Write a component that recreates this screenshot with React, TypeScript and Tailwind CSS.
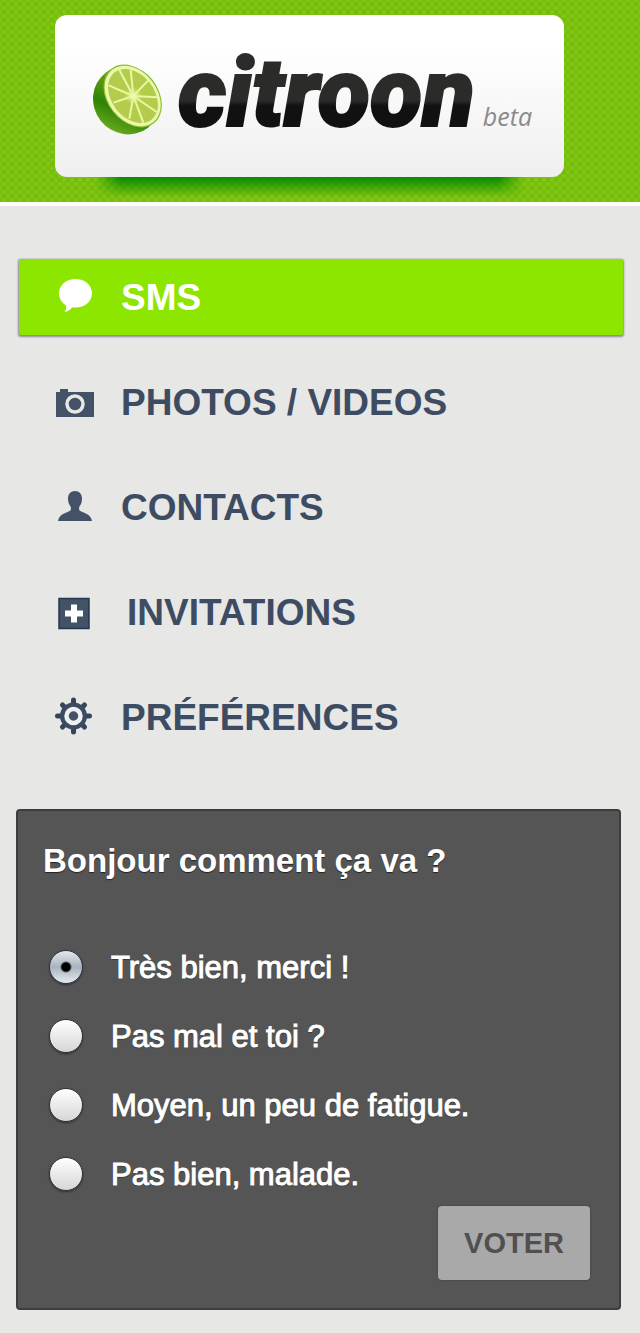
import { useState } from "react";
import type { ReactNode } from "react";

const spokes = [
  [118, 60],
  [152, 58],
  [204, 92],
  [232, 142],
  [230, 186],
  [190, 218],
  [148, 206],
  [100, 158],
  [86, 106],
];

function Lime() {
  return (
    <svg viewBox="36 36 210 222" className="h-[74px] w-[70px] shrink-0" aria-hidden="true">
      <defs>
        <linearGradient id="rind" x1="0.1" y1="0.1" x2="0.6" y2="1">
          <stop offset="0" stopColor="#86b81f" />
          <stop offset="0.35" stopColor="#5f9c16" />
          <stop offset="0.7" stopColor="#2f8306" />
          <stop offset="1" stopColor="#65a61c" />
        </linearGradient>
        <radialGradient id="core" cx="0.5" cy="0.5" r="0.5">
          <stop offset="0" stopColor="#f3fbc0" />
          <stop offset="0.4" stopColor="#e6f59a" stopOpacity="0.8" />
          <stop offset="1" stopColor="#d9ee7a" stopOpacity="0" />
        </radialGradient>
      </defs>
      <ellipse cx="140" cy="151" rx="104" ry="99" transform="rotate(52 140 151)" fill="url(#rind)" />
      <ellipse cx="158" cy="138" rx="104" ry="76" transform="rotate(52 158 138)" fill="#8dbd28" />
      <ellipse cx="158" cy="138" rx="100" ry="73" transform="rotate(52 158 138)" fill="#eaf8ae" />
      <ellipse cx="159" cy="138" rx="90" ry="64" transform="rotate(52 159 138)" fill="#b3cc4c" />
      {spokes.map(([x, y]) => (
        <line key={`${x}-${y}`} x1="160" y1="138" x2={x} y2={y} stroke="#e9f7a6" strokeWidth="6" />
      ))}
      <circle cx="160" cy="138" r="26" fill="url(#core)" />
    </svg>
  );
}

const bubble = (
  <svg viewBox="0 0 40 40" className="h-10 w-10 fill-white" aria-hidden="true">
    <path d="M20.500 2C29.700 2 37 8 37 16.300S29.700 30.600 20.500 30.600c-1.200 0-2.300-.1-3.300-.3C15 33.400 12.500 34.500 9.600 35.200c1.500-2.200 1.600-4.500 1.300-7C6.700 25.700 4 21.600 4 16.300 4 8 11.300 2 20.500 2z" />
  </svg>
);

const camera = (
  <svg viewBox="0 0 40 40" className="h-10 w-10 fill-[#435266]" aria-hidden="true">
    <path d="M1 10h4V7h8v3h26v25H1z" />
    <circle cx="20" cy="22" r="8" fill="none" stroke="#e7e7e5" strokeWidth="3.500" />
  </svg>
);

const person = (
  <svg viewBox="0 0 40 40" className="h-10 w-10 fill-[#435266]" aria-hidden="true">
    <path d="M20 4c4.300 0 7 3 7 7.800 0 3.200-1 6-2.700 8-.4 1.600-.3 3 .5 4 2 1.600 11.200 2.700 12.200 10.200H3c1-7.500 10.200-8.600 12.200-10.200.8-1 .9-2.400.5-4-1.700-2-2.700-4.800-2.700-8C13 7 15.700 4 20 4z" />
  </svg>
);

const plus = (
  <svg viewBox="0 0 46 40" className="h-10 w-[46px]" aria-hidden="true">
    <rect x="4" y="6.500" width="30" height="30" fill="#435266" stroke="#26384f" strokeWidth="1.500" />
    <path d="M16 12.500h6v6h6v6h-6v6h-6v-6h-6v-6h6z" fill="#fff" />
  </svg>
);

const gear = (
  <svg viewBox="0 0 40 40" className="h-10 w-10" aria-hidden="true">
    <path
      d="M18.500 3v32M2.500 19h32M7.500 8l22 22M29.500 8l-22 22"
      fill="none"
      stroke="#34445a"
      strokeWidth="5"
      strokeLinecap="round"
    />
    <circle cx="18.500" cy="19" r="13.500" fill="#3c4b60" />
    <circle cx="18.500" cy="19" r="7" fill="#435266" stroke="#eef1f4" strokeWidth="4.500" />
  </svg>
);

const links: { label: string; icon: ReactNode }[] = [
  { label: "SMS", icon: bubble },
  { label: "PHOTOS / VIDEOS", icon: camera },
  { label: "CONTACTS", icon: person },
  { label: "INVITATIONS", icon: plus },
  { label: "PRÉFÉRENCES", icon: gear },
];

const answers = [
  "Très bien, merci !",
  "Pas mal et toi ?",
  "Moyen, un peu de fatigue.",
  "Pas bien, malade.",
];

function Header() {
  return (
    <header className="border-b-4 border-white bg-[#83ca12] bg-[linear-gradient(45deg,transparent_30%,#6cb00c88_50%,transparent_70%),linear-gradient(-45deg,transparent_30%,#6cb00c88_50%,transparent_70%)] bg-size-[8px_8px] px-[55px] pt-[15px]">
      <div className="flex h-[162px] max-w-[509px] items-center rounded-xl bg-linear-to-b from-white from-20% to-[#efefef] pt-1.5 pl-[37px]">
        <Lime />
        <div className="flex items-baseline pb-3 pl-4">
          <span className="bg-linear-to-b from-[#2b2b29] from-57% to-[#111] to-62% bg-clip-text pr-2 font-['Roboto',sans-serif] text-[96px] leading-[108px] font-black text-transparent italic [-webkit-text-stroke:2px_transparent]">
            citroon
          </span>
          <span className="font-['Open_Sans',sans-serif] text-[25px] text-[#8a8a8a] italic">beta</span>
        </div>
      </div>
      <div className="h-[25px] max-w-[509px] px-10">
        <div className="h-5 bg-linear-to-b from-[#078a00] to-transparent mask-x-from-94%" />
      </div>
    </header>
  );
}

function Menu() {
  return (
    <nav className="flex flex-col gap-[29px] pr-[17px] pl-[19px]">
      {links.map(({ label, icon }, i) => (
        <a
          key={label}
          href="#"
          className={
            i === 0
              ? "flex h-[76px] items-center gap-[26px] rounded-xs bg-[#8de600] pl-9 text-[37px] font-bold text-white shadow-[0_1px_2px_1px_#8f8a99]"
              : "flex h-[76px] items-center gap-[26px] rounded-xs pl-9 text-[37px] font-bold text-[#3d4c62]"
          }
        >
          {icon}
          <span className="pt-0.5">{label}</span>
        </a>
      ))}
    </nav>
  );
}

function Poll() {
  const [choice, setChoice] = useState(0);
  return (
    <form
      onSubmit={(e) => e.preventDefault()}
      className="mt-[54px] mr-[19px] ml-4 rounded-sm border-2 border-[#3d3d3e] bg-[#555] pt-7 pr-[29px] pb-7 pl-[25px] text-white"
    >
      <fieldset>
        <legend className="text-[33px] leading-[44px] font-bold text-shadow-[0_1px_1px_#222]">
          Bonjour comment ça va ?
        </legend>
        <div className="flex flex-col pt-[49px]">
          {answers.map((text, i) => (
            <label
              key={text}
              className="flex h-[69px] items-center gap-7 pl-1.5 text-[31px] text-shadow-[0_1px_1px_#222] [-webkit-text-stroke:1px_white]"
            >
              <input
                type="radio"
                name="answer"
                checked={choice === i}
                onChange={() => setChoice(i)}
                className="size-[34px] shrink-0 appearance-none rounded-full border border-[#34343f] bg-linear-to-b from-white to-[#d6d6d6] shadow-[0_1px_2px_#2e2e38] checked:bg-[radial-gradient(circle,#000_0_4px,transparent_6px),linear-gradient(#e3e7eb,#a9b3be_50%,#e4ebf0)]"
              />
              <span className="pt-1">{text}</span>
            </label>
          ))}
        </div>
      </fieldset>
      <div className="-mt-0.5 flex justify-end">
        <button
          type="submit"
          className="h-[74px] rounded-sm bg-[#a9a9a9] px-[26px] pt-0.5 text-[29px] font-bold text-[#505052] shadow-[0_0_2px_#3c3c3c]"
        >
          VOTER
        </button>
      </div>
    </form>
  );
}

export default function App() {
  return (
    <div className="min-h-screen bg-[#e7e7e5] pb-5 font-['Liberation_Sans',Arial,sans-serif]">
      <Header />
      <main className="pt-[53px]">
        <Menu />
        <Poll />
      </main>
    </div>
  );
}
